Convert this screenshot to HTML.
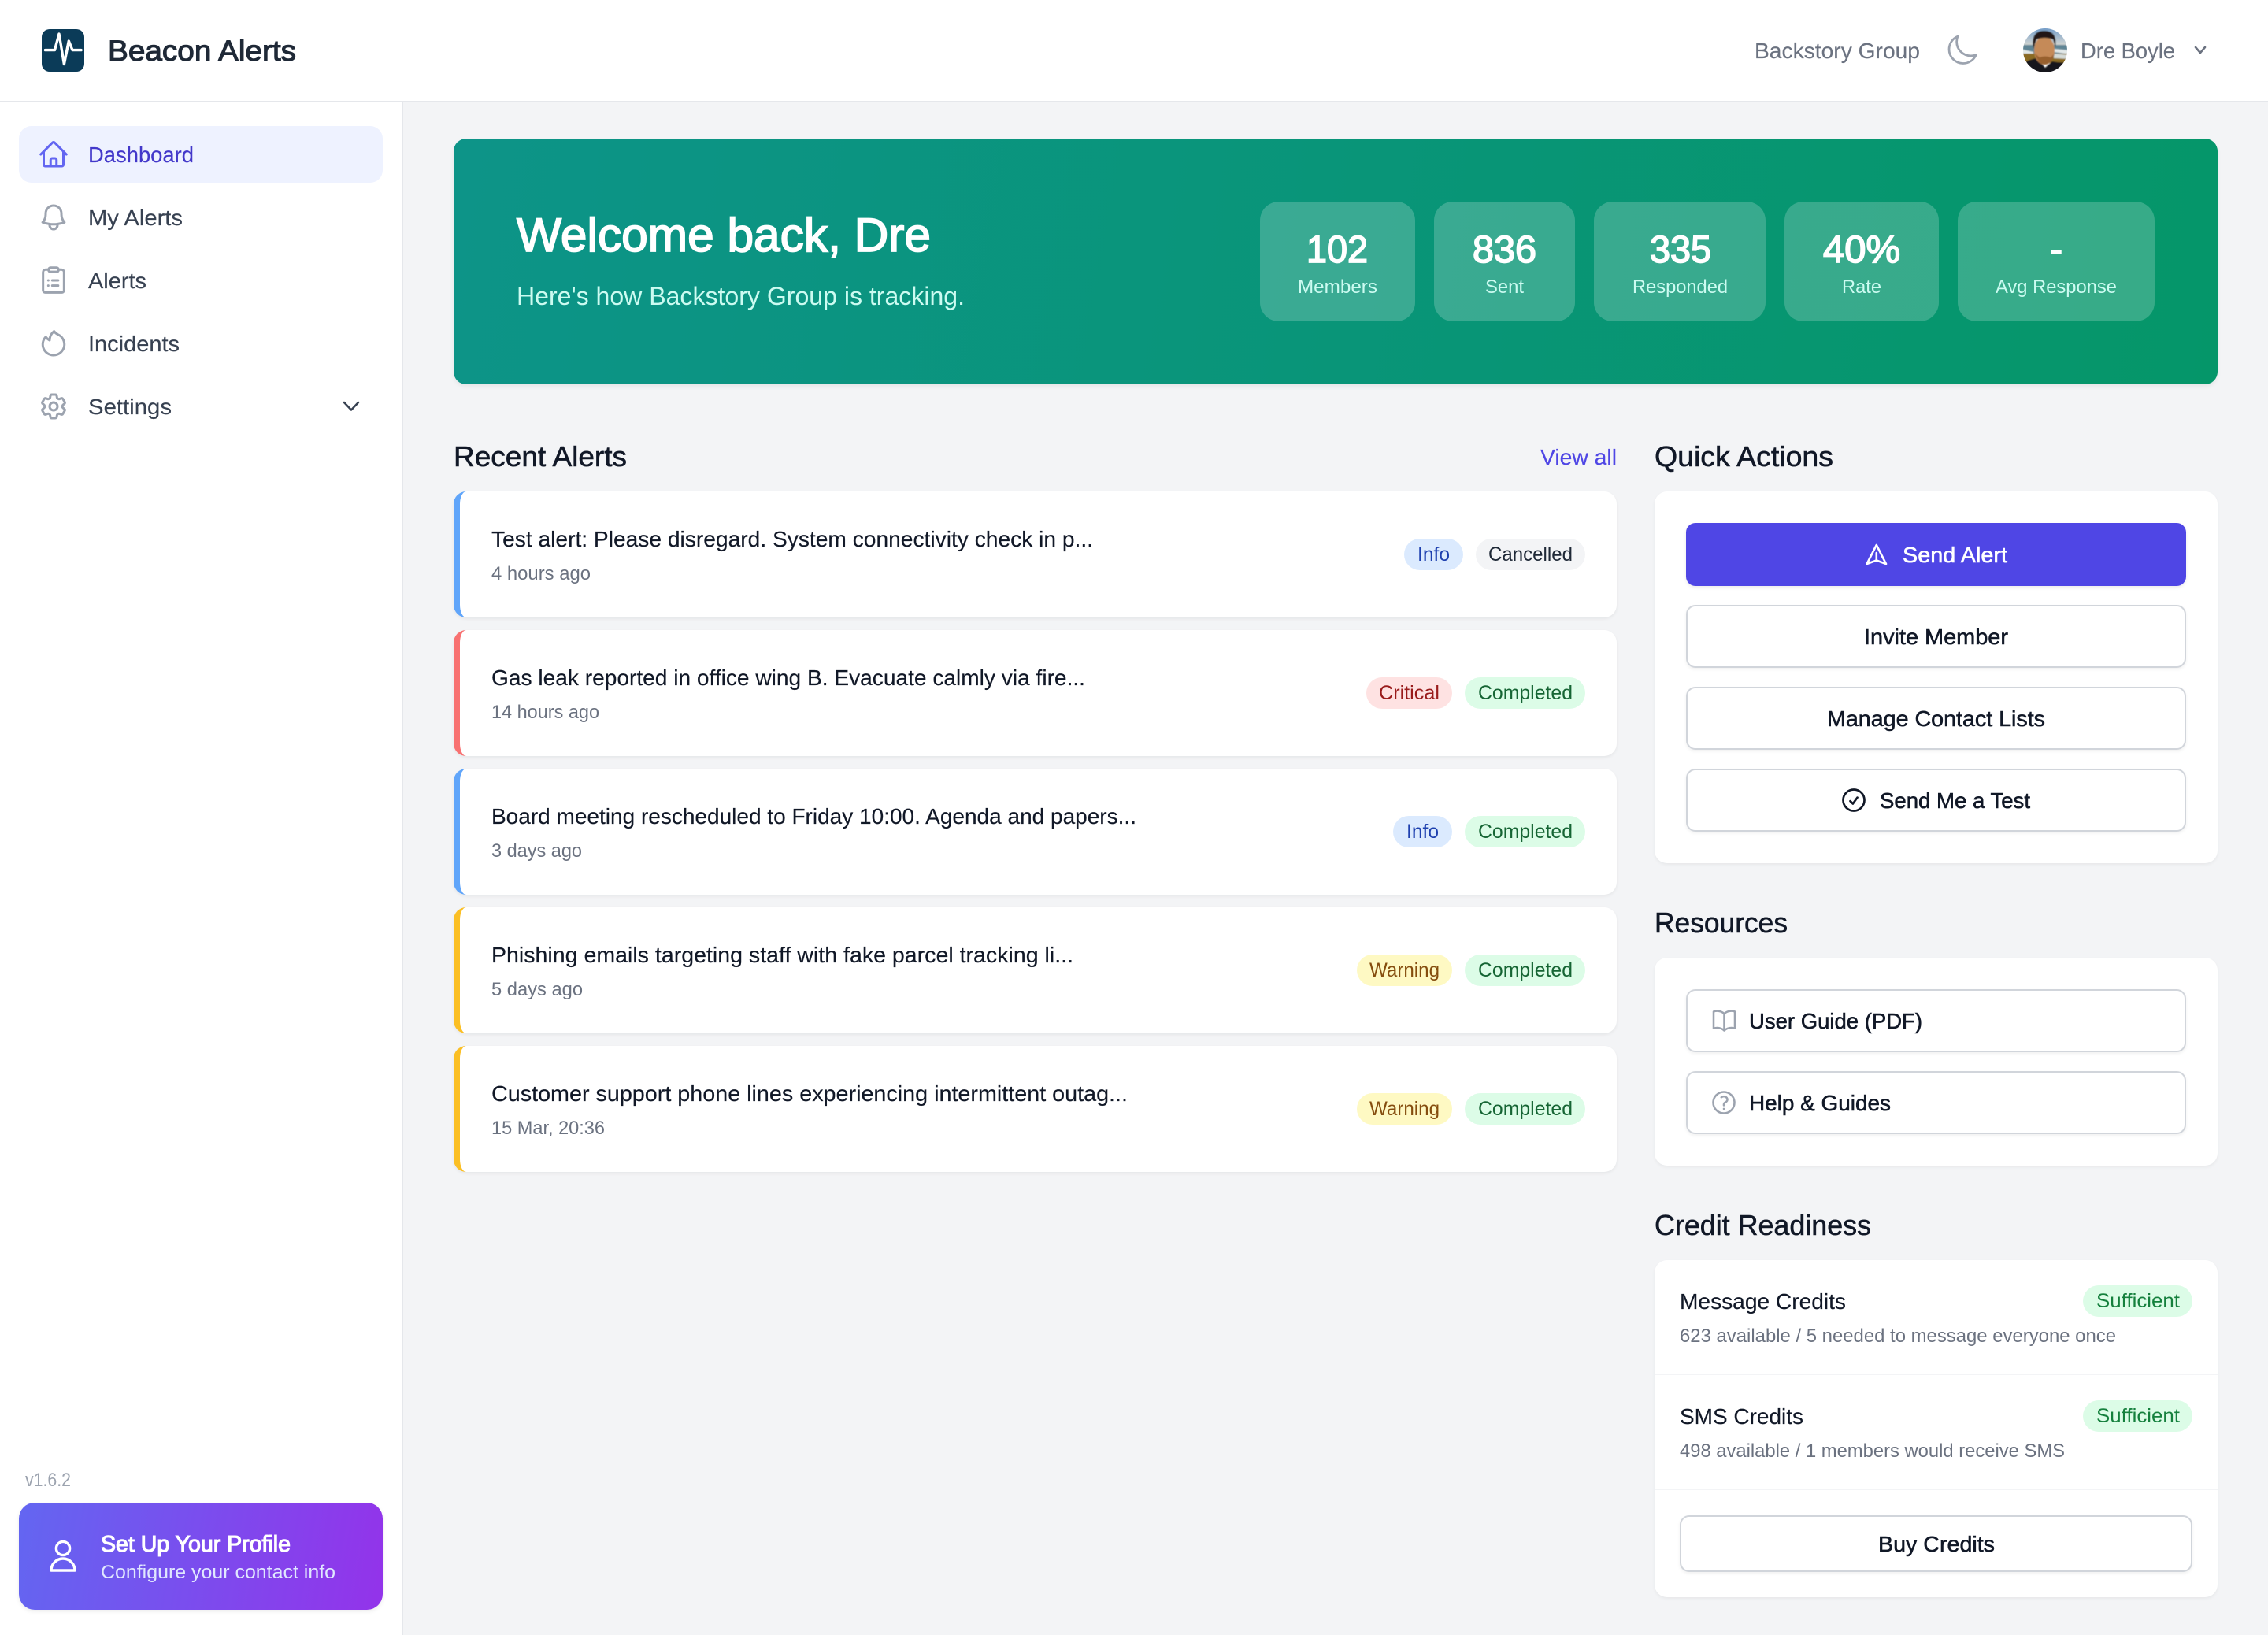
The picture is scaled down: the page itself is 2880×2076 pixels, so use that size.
<!DOCTYPE html>
<html lang="en"><head><meta charset="utf-8"><title>Beacon Alerts</title>
<style>
html,body{margin:0;padding:0;width:2880px;height:2076px;overflow:hidden;background:#f3f4f6;font-family:"Liberation Sans",sans-serif}
.a{position:absolute;box-sizing:border-box}
.card{left:576px;width:1477px;height:160px;background:#fff;border-radius:16px;border-left:8px solid;box-shadow:0 2px 4px rgba(0,0,0,.06)}
.panel{left:2101px;width:715px;background:#fff;border-radius:16px;box-shadow:0 2px 4px rgba(0,0,0,.05)}
.btn{left:2141px;width:635px;height:80px;background:#fff;border:2px solid #d1d5db;border-radius:12px;box-shadow:0 2px 4px rgba(0,0,0,.06)}
.stat{top:256px;height:152px;border-radius:24px;background:rgba(255,255,255,.2)}
svg{position:absolute;left:0;top:0}
text{font-family:"Liberation Sans",sans-serif;fill:currentColor}
.rg{stroke:currentColor;stroke-width:.15}
.md{stroke:currentColor;stroke-width:.55}
.sb{stroke:currentColor;stroke-width:1.1}
.xb{stroke:currentColor;stroke-width:1.7}
.i{fill:none;stroke-linecap:round;stroke-linejoin:round}
</style></head><body>
<div class="a" style="left:0;top:0;width:2880px;height:130px;background:#fff;border-bottom:2px solid #e5e7eb"></div>
<div class="a" style="left:0;top:130px;width:512px;height:1946px;background:#fff;border-right:2px solid #e5e7eb"></div>
<div class="a" style="left:24px;top:160px;width:462px;height:72px;background:#eef2ff;border-radius:16px"></div>
<div class="a" style="left:24px;top:1908px;width:462px;height:136px;border-radius:20px;background:linear-gradient(100deg,#6366f1,#9333ea);box-shadow:0 2px 6px rgba(0,0,0,.08)"></div>

<div class="a" style="left:576px;top:176px;width:2240px;height:312px;border-radius:16px;background:linear-gradient(100deg,#0d9488,#059669);box-shadow:0 3px 6px rgba(0,0,0,.06)"></div>
<div class="a stat" style="left:1600px;width:197px"></div>
<div class="a stat" style="left:1821px;width:179px"></div>
<div class="a stat" style="left:2024px;width:218px"></div>
<div class="a stat" style="left:2266px;width:196px"></div>
<div class="a stat" style="left:2486px;width:250px"></div>

<div class="a card" style="top:624px;border-left-color:#60a5fa"></div>
<div class="a card" style="top:800px;border-left-color:#f87171"></div>
<div class="a card" style="top:976px;border-left-color:#60a5fa"></div>
<div class="a card" style="top:1152px;border-left-color:#fbbf24"></div>
<div class="a card" style="top:1328px;border-left-color:#fbbf24"></div>

<div class="a panel" style="top:624px;height:472px"></div>
<div class="a" style="left:2141px;top:664px;width:635px;height:80px;background:#4f46e5;border-radius:12px;box-shadow:0 2px 4px rgba(0,0,0,.08)"></div>
<div class="a btn" style="top:768px"></div>
<div class="a btn" style="top:872px"></div>
<div class="a btn" style="top:976px"></div>

<div class="a panel" style="top:1216px;height:264px"></div>
<div class="a btn" style="top:1256px"></div>
<div class="a btn" style="top:1360px"></div>

<div class="a panel" style="top:1600px;height:428px"></div>
<div class="a" style="left:2101px;top:1744px;width:715px;height:2px;background:#f3f4f6"></div>
<div class="a" style="left:2101px;top:1890px;width:715px;height:2px;background:#f3f4f6"></div>
<div class="a btn" style="left:2133px;top:1924px;width:651px;height:72px"></div>

<svg width="2880" height="2076" viewBox="0 0 2880 2076" xmlns="http://www.w3.org/2000/svg">
<defs>
<clipPath id="av"><circle cx="2597" cy="64" r="28"/></clipPath>
<filter id="bl" x="-10%" y="-10%" width="120%" height="120%"><feGaussianBlur stdDeviation=".7"/></filter>
<linearGradient id="sky" x1="0" y1="0" x2="0" y2="1"><stop offset="0" stop-color="#6b98c8"/><stop offset="1" stop-color="#d6d8d2"/></linearGradient>
</defs>

<!-- logo -->
<rect x="53" y="37" width="54" height="54" rx="10" fill="#0b3b58"/>
<path class="i" d="M57.5 63.6H69.5L75 43L81.4 81.5L87.3 52L92 63.6H103" stroke="#fff" stroke-width="3.4"/>
<text x="137" y="77" font-size="37" textLength="239" lengthAdjust="spacingAndGlyphs" class="sb" style="color:#1f2937">Beacon Alerts</text>

<!-- top right -->
<text x="2228" y="74" font-size="28" textLength="210" lengthAdjust="spacingAndGlyphs" class="rg" style="color:#6b7280">Backstory Group</text>
<g transform="translate(2469.5,42) scale(1.833)"><path class="i" stroke="#9ca3af" stroke-width="1.5" d="M21.752 15.002A9.72 9.72 0 0 1 18 15.75c-5.385 0-9.75-4.365-9.75-9.75 0-1.33.266-2.597.748-3.752A9.753 9.753 0 0 0 3 11.25C3 16.635 7.365 21 12.75 21a9.753 9.753 0 0 0 9.002-5.998Z"/></g>
<g clip-path="url(#av)"><g filter="url(#bl)">
<rect x="2565" y="34" width="64" height="24" fill="url(#sky)"/>
<rect x="2565" y="57" width="64" height="11" fill="#5f8494"/>
<path d="M2565 62L2582 66L2582 69L2565 68ZM2608 66L2629 69V64L2608 62Z" fill="#e2e8e8"/>
<rect x="2565" y="68" width="64" height="12" fill="#8a6a22"/>
<path d="M2608 68L2629 70V75L2608 74Z" fill="#d5dbd8"/>
<path d="M2566 94L2570 80Q2578 75 2586 74L2597 86L2606 78Q2616 80 2626 79L2630 94Z" fill="#14151d"/>
<ellipse cx="2596" cy="64" rx="13" ry="18" fill="#c58a58"/>
<path d="M2584 68Q2589 83 2597 82Q2605 82 2609 68L2604 73Q2597 70 2590 73Z" fill="#98602f"/>
<path d="M2582 62Q2578 39 2596 39Q2613 39 2610 60L2607 50Q2596 46 2586 50Z" fill="#241812"/>
</g></g>
<text x="2642" y="74" font-size="28" textLength="120" lengthAdjust="spacingAndGlyphs" class="rg" style="color:#6b7280">Dre Boyle</text>
<path class="i" stroke="#6b7280" stroke-width="2.6" d="M2788 60L2794 67L2800 60"/>

<!-- nav -->
<g transform="translate(48,176) scale(1.667)"><path class="i" stroke="#6366f1" stroke-width="1.8" d="m2.25 12 8.954-8.955c.44-.439 1.152-.439 1.591 0L21.75 12M4.5 9.75v10.125c0 .621.504 1.125 1.125 1.125H9.75v-4.875c0-.621.504-1.125 1.125-1.125h2.25c.621 0 1.125.504 1.125 1.125V21h4.125c.621 0 1.125-.504 1.125-1.125V9.75M8.25 21h8.25"/></g>
<g transform="translate(48,256) scale(1.667)"><path class="i" stroke="#9ca3af" stroke-width="1.8" d="M14.857 17.082a23.848 23.848 0 0 0 5.454-1.31A8.967 8.967 0 0 1 18 9.75V9A6 6 0 0 0 6 9v.75a8.967 8.967 0 0 1-2.312 6.022c1.733.64 3.56 1.085 5.455 1.31m5.714 0a24.255 24.255 0 0 1-5.714 0m5.714 0a3 3 0 1 1-5.714 0"/></g>
<g transform="translate(48,336) scale(1.667)"><path class="i" stroke="#9ca3af" stroke-width="1.8" d="M8.25 3.75H6A2 2 0 0 0 4 5.75V19.5A1.75 1.75 0 0 0 5.75 21.25H18.25A1.75 1.75 0 0 0 20 19.5V5.75A2 2 0 0 0 18 3.75H15.75M9.75 2.25H14.25A1.5 1.5 0 0 1 15.75 3.75V4.25A1.25 1.25 0 0 1 14.5 5.5H9.5A1.25 1.25 0 0 1 8.25 4.25V3.75A1.5 1.5 0 0 1 9.75 2.25ZM8 12H8.01M8 16H8.01M11 12H15.5M11 16H15.5"/></g>
<g transform="translate(48,416) scale(1.667)"><path class="i" stroke="#9ca3af" stroke-width="1.8" d="M15.362 5.214A8.252 8.252 0 0 1 12 21 8.25 8.25 0 0 1 6.038 7.047 8.287 8.287 0 0 0 9 9.601a8.983 8.983 0 0 1 3.361-6.867 8.21 8.21 0 0 0 3 2.48Z"/></g>
<g transform="translate(48,496) scale(1.667)"><path class="i" stroke="#9ca3af" stroke-width="1.8" d="M9.594 3.94c.09-.542.56-.94 1.11-.94h2.593c.55 0 1.02.398 1.11.94l.213 1.281c.063.374.313.686.645.87.074.04.147.083.22.127.325.196.72.257 1.075.124l1.217-.456a1.125 1.125 0 0 1 1.37.49l1.296 2.247a1.125 1.125 0 0 1-.26 1.431l-1.003.827c-.293.241-.438.613-.43.992a7.723 7.723 0 0 1 0 .255c-.008.378.137.75.43.991l1.004.827c.424.35.534.955.26 1.43l-1.298 2.247a1.125 1.125 0 0 1-1.369.491l-1.217-.456c-.355-.133-.75-.072-1.076.124a6.47 6.47 0 0 1-.22.128c-.331.183-.581.495-.644.869l-.213 1.281c-.09.543-.56.94-1.11.94h-2.594c-.55 0-1.019-.398-1.11-.94l-.213-1.281c-.062-.374-.312-.686-.644-.87a6.52 6.52 0 0 1-.22-.127c-.325-.196-.72-.257-1.076-.124l-1.217.456a1.125 1.125 0 0 1-1.369-.49l-1.297-2.247a1.125 1.125 0 0 1 .26-1.431l1.004-.827c.292-.24.437-.613.43-.991a6.932 6.932 0 0 1 0-.255c.007-.38-.138-.751-.43-.992l-1.004-.827a1.125 1.125 0 0 1-.26-1.43l1.297-2.247a1.125 1.125 0 0 1 1.37-.491l1.216.456c.356.133.751.072 1.076-.124.072-.044.146-.086.22-.128.332-.183.582-.495.644-.869l.214-1.28ZM15 12a3 3 0 1 1-6 0 3 3 0 0 1 6 0Z"/></g>
<text x="112" y="206" font-size="28" textLength="134" lengthAdjust="spacingAndGlyphs" class="rg" style="color:#4338ca">Dashboard</text>
<text x="112" y="286" font-size="28" textLength="120" lengthAdjust="spacingAndGlyphs" class="rg" style="color:#374151">My Alerts</text>
<text x="112" y="366" font-size="28" textLength="74" lengthAdjust="spacingAndGlyphs" class="rg" style="color:#374151">Alerts</text>
<text x="112" y="446" font-size="28" textLength="116" lengthAdjust="spacingAndGlyphs" class="rg" style="color:#374151">Incidents</text>
<text x="112" y="526" font-size="28" textLength="106" lengthAdjust="spacingAndGlyphs" class="rg" style="color:#374151">Settings</text>
<path class="i" stroke="#374151" stroke-width="2.5" d="M437 511L446 520.5L455 511"/>

<!-- sidebar bottom -->
<text x="32" y="1887" font-size="24" textLength="58" lengthAdjust="spacingAndGlyphs" style="color:#9ca3af">v1.6.2</text>
<circle cx="80" cy="1966" r="8.6" fill="none" stroke="#fff" stroke-width="3.4"/>
<path class="i" stroke="#fff" stroke-width="3.4" d="M65 1994A15 15 0 0 1 95 1994Z"/>
<text x="128" y="1970" font-size="29" textLength="241" lengthAdjust="spacingAndGlyphs" class="sb" style="color:#fff">Set Up Your Profile</text>
<text x="128" y="2004" font-size="24" textLength="298" lengthAdjust="spacingAndGlyphs" style="color:#e0e7ff">Configure your contact info</text>

<!-- hero -->
<text x="656" y="319" font-size="60" textLength="526" lengthAdjust="spacingAndGlyphs" class="xb" style="color:#fff">Welcome back, Dre</text>
<text x="656" y="387" font-size="32" textLength="569" lengthAdjust="spacingAndGlyphs" style="color:#ccfbf1">Here's how Backstory Group is tracking.</text>
<text x="1659" y="333" font-size="48" textLength="78" lengthAdjust="spacingAndGlyphs" class="xb" style="color:#fff">102</text>
<text x="1870" y="333" font-size="48" textLength="81" lengthAdjust="spacingAndGlyphs" class="xb" style="color:#fff">836</text>
<text x="2095" y="333" font-size="48" textLength="78" lengthAdjust="spacingAndGlyphs" class="xb" style="color:#fff">335</text>
<text x="2315" y="333" font-size="48" textLength="98" lengthAdjust="spacingAndGlyphs" class="xb" style="color:#fff">40%</text>
<text x="2603" y="333" font-size="48" textLength="16" lengthAdjust="spacingAndGlyphs" class="xb" style="color:#fff">-</text>
<text x="1648" y="372" font-size="24" textLength="101" lengthAdjust="spacingAndGlyphs" style="color:#ccfbf1">Members</text>
<text x="1886" y="372" font-size="24" textLength="49" lengthAdjust="spacingAndGlyphs" style="color:#ccfbf1">Sent</text>
<text x="2073" y="372" font-size="24" textLength="121" lengthAdjust="spacingAndGlyphs" style="color:#ccfbf1">Responded</text>
<text x="2339" y="372" font-size="24" textLength="50" lengthAdjust="spacingAndGlyphs" style="color:#ccfbf1">Rate</text>
<text x="2534" y="372" font-size="24" textLength="154" lengthAdjust="spacingAndGlyphs" style="color:#ccfbf1">Avg Response</text>

<!-- section titles -->
<text x="576" y="592" font-size="36" textLength="220" lengthAdjust="spacingAndGlyphs" class="md" style="color:#111827">Recent Alerts</text>
<text x="1956" y="590" font-size="28" textLength="97" lengthAdjust="spacingAndGlyphs" class="rg" style="color:#4f46e5">View all</text>
<text x="2101" y="592" font-size="36" textLength="227" lengthAdjust="spacingAndGlyphs" class="md" style="color:#111827">Quick Actions</text>
<text x="2101" y="1184" font-size="36" textLength="169" lengthAdjust="spacingAndGlyphs" class="md" style="color:#111827">Resources</text>
<text x="2101" y="1568" font-size="36" textLength="275" lengthAdjust="spacingAndGlyphs" class="md" style="color:#111827">Credit Readiness</text>

<!-- alerts text -->
<g style="color:#111827" font-size="28">
<text x="624" y="694" textLength="764" lengthAdjust="spacingAndGlyphs" class="rg">Test alert: Please disregard. System connectivity check in p...</text>
<text x="624" y="870" textLength="754" lengthAdjust="spacingAndGlyphs" class="rg">Gas leak reported in office wing B. Evacuate calmly via fire...</text>
<text x="624" y="1046" textLength="819" lengthAdjust="spacingAndGlyphs" class="rg">Board meeting rescheduled to Friday 10:00. Agenda and papers...</text>
<text x="624" y="1222" textLength="739" lengthAdjust="spacingAndGlyphs" class="rg">Phishing emails targeting staff with fake parcel tracking li...</text>
<text x="624" y="1398" textLength="808" lengthAdjust="spacingAndGlyphs" class="rg">Customer support phone lines experiencing intermittent outag...</text>
</g>
<g style="color:#6b7280" font-size="24">
<text x="624" y="736" textLength="126" lengthAdjust="spacingAndGlyphs">4 hours ago</text>
<text x="624" y="912" textLength="137" lengthAdjust="spacingAndGlyphs">14 hours ago</text>
<text x="624" y="1088" textLength="115" lengthAdjust="spacingAndGlyphs">3 days ago</text>
<text x="624" y="1264" textLength="116" lengthAdjust="spacingAndGlyphs">5 days ago</text>
<text x="624" y="1440" textLength="144" lengthAdjust="spacingAndGlyphs">15 Mar, 20:36</text>
</g>

<!-- badges -->
<rect x="1783" y="684" width="75" height="40" rx="20" fill="#dbeafe"/><text x="1800" y="712" font-size="25" textLength="41" lengthAdjust="spacingAndGlyphs" style="color:#1e40af">Info</text>
<rect x="1874" y="684" width="139" height="40" rx="20" fill="#f3f4f6"/><text x="1890" y="712" font-size="25" textLength="107" lengthAdjust="spacingAndGlyphs" style="color:#1f2937">Cancelled</text>
<rect x="1735" y="860" width="109" height="40" rx="20" fill="#fee2e2"/><text x="1751" y="888" font-size="25" textLength="77" lengthAdjust="spacingAndGlyphs" style="color:#991b1b">Critical</text>
<rect x="1860" y="860" width="153" height="40" rx="20" fill="#dcfce7"/><text x="1877" y="888" font-size="25" textLength="120" lengthAdjust="spacingAndGlyphs" style="color:#166534">Completed</text>
<rect x="1769" y="1036" width="75" height="40" rx="20" fill="#dbeafe"/><text x="1786" y="1064" font-size="25" textLength="41" lengthAdjust="spacingAndGlyphs" style="color:#1e40af">Info</text>
<rect x="1860" y="1036" width="153" height="40" rx="20" fill="#dcfce7"/><text x="1877" y="1064" font-size="25" textLength="120" lengthAdjust="spacingAndGlyphs" style="color:#166534">Completed</text>
<rect x="1723" y="1212" width="121" height="40" rx="20" fill="#fef9c3"/><text x="1739" y="1240" font-size="25" textLength="89" lengthAdjust="spacingAndGlyphs" style="color:#854d0e">Warning</text>
<rect x="1860" y="1212" width="153" height="40" rx="20" fill="#dcfce7"/><text x="1877" y="1240" font-size="25" textLength="120" lengthAdjust="spacingAndGlyphs" style="color:#166534">Completed</text>
<rect x="1723" y="1388" width="121" height="40" rx="20" fill="#fef9c3"/><text x="1739" y="1416" font-size="25" textLength="89" lengthAdjust="spacingAndGlyphs" style="color:#854d0e">Warning</text>
<rect x="1860" y="1388" width="153" height="40" rx="20" fill="#dcfce7"/><text x="1877" y="1416" font-size="25" textLength="120" lengthAdjust="spacingAndGlyphs" style="color:#166534">Completed</text>

<!-- quick actions -->
<path class="i" stroke="#fff" stroke-width="2.6" d="M2382.8 692L2395 716L2382.8 711.5L2370.6 716ZM2382.8 702V711.5"/>
<text x="2416" y="714" font-size="28" textLength="133" lengthAdjust="spacingAndGlyphs" class="md" style="color:#fff">Send Alert</text>
<text x="2367" y="818" font-size="28" textLength="183" lengthAdjust="spacingAndGlyphs" class="md" style="color:#111827">Invite Member</text>
<text x="2320" y="922" font-size="28" textLength="277" lengthAdjust="spacingAndGlyphs" class="md" style="color:#111827">Manage Contact Lists</text>
<g transform="translate(2336,998) scale(1.5)"><path class="i" stroke="#111827" stroke-width="1.8" d="M9 12.75 11.25 15 15 9.75M21 12a9 9 0 1 1-18 0 9 9 0 0 1 18 0Z"/></g>
<text x="2387" y="1026" font-size="28" textLength="191" lengthAdjust="spacingAndGlyphs" class="md" style="color:#111827">Send Me a Test</text>

<!-- resources -->
<g transform="translate(2171.5,1278) scale(1.5)"><path class="i" stroke="#9ca3af" stroke-width="1.7" d="M12 6.042A8.967 8.967 0 0 0 6 3.75c-1.052 0-2.062.18-3 .512v14.25A8.987 8.987 0 0 1 6 18c2.305 0 4.408.867 6 2.292m0-14.25a8.966 8.966 0 0 1 6-2.292c1.052 0 2.062.18 3 .512v14.25A8.987 8.987 0 0 0 18 18a8.967 8.967 0 0 0-6 2.292m0-14.25v14.25"/></g>
<text x="2221" y="1306" font-size="28" textLength="220" lengthAdjust="spacingAndGlyphs" class="md" style="color:#111827">User Guide (PDF)</text>
<g transform="translate(2171,1382) scale(1.5)"><path class="i" stroke="#9ca3af" stroke-width="1.7" d="M9.879 7.519c1.171-1.025 3.071-1.025 4.242 0 1.172 1.025 1.172 2.687 0 3.712-.203.179-.43.326-.67.442-.745.361-1.45.999-1.45 1.827v.75M21 12a9 9 0 1 1-18 0 9 9 0 0 1 18 0Zm-9 5.25h.008v.008H12v-.008Z"/></g>
<text x="2221" y="1410" font-size="28" textLength="180" lengthAdjust="spacingAndGlyphs" class="md" style="color:#111827">Help &amp; Guides</text>

<!-- credits -->
<text x="2133" y="1662" font-size="28" textLength="211" lengthAdjust="spacingAndGlyphs" class="rg" style="color:#111827">Message Credits</text>
<rect x="2645" y="1632" width="139" height="40" rx="20" fill="#dcfce7"/>
<text x="2662" y="1660" font-size="25" textLength="106" lengthAdjust="spacingAndGlyphs" style="color:#15803d">Sufficient</text>
<text x="2133" y="1704" font-size="24" textLength="554" lengthAdjust="spacingAndGlyphs" style="color:#6b7280">623 available / 5 needed to message everyone once</text>
<text x="2133" y="1808" font-size="28" textLength="157" lengthAdjust="spacingAndGlyphs" class="rg" style="color:#111827">SMS Credits</text>
<rect x="2645" y="1778" width="139" height="40" rx="20" fill="#dcfce7"/>
<text x="2662" y="1806" font-size="25" textLength="106" lengthAdjust="spacingAndGlyphs" style="color:#15803d">Sufficient</text>
<text x="2133" y="1850" font-size="24" textLength="489" lengthAdjust="spacingAndGlyphs" style="color:#6b7280">498 available / 1 members would receive SMS</text>
<text x="2385" y="1970" font-size="28" textLength="148" lengthAdjust="spacingAndGlyphs" class="md" style="color:#111827">Buy Credits</text>
</svg>
</body></html>
